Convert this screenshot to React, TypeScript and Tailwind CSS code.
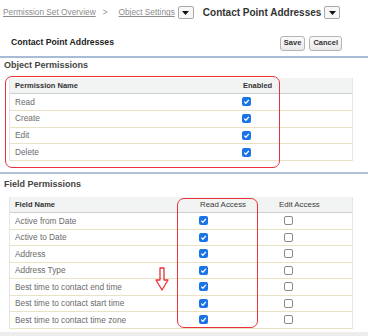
import React from "react";

const objectRows = ["Read", "Create", "Edit", "Delete"];

const fieldRows = [
  "Active from Date",
  "Active to Date",
  "Address",
  "Address Type",
  "Best time to contact end time",
  "Best time to contact start time",
  "Best time to contact time zone",
];

function Checked() {
  return (
    <span className="flex h-[9px] w-[9px] items-center justify-center rounded-[2px] bg-[#1a73e8]">
      <svg width="7" height="7" viewBox="0 0 10 10">
        <path d="M1.8 5.2 L4.1 7.4 L8.4 2.6" fill="none" stroke="#fff" strokeWidth="1.9" />
      </svg>
    </span>
  );
}

function Unchecked() {
  return <span className="block h-[9px] w-[9px] rounded-[2px] border border-[#8a8a8a] bg-white" />;
}

function Dropdown() {
  return (
    <span className="flex h-[13px] w-[16px] items-center justify-center rounded-[2px] border border-[#a9a9a9] bg-[#f7f7f7]">
      <svg width="7" height="4" viewBox="0 0 7 4">
        <path d="M0 0 L7 0 L3.5 4 Z" fill="#111" />
      </svg>
    </span>
  );
}

function Btn({ label }: { label: string }) {
  return (
    <button className="h-[15px] rounded-[3px] border border-[#b5b5b5] bg-gradient-to-b from-[#fbfbfb] to-[#e9e9e9] px-[3px] text-[7.5px] font-bold leading-none text-[#333]">
      {label}
    </button>
  );
}

export default function App() {
  return (
    <div className="relative h-[336px] w-[368px] overflow-hidden bg-white font-['Liberation_Sans',Arial,sans-serif]">
      {/* breadcrumb */}
      <div className="flex h-[25px] items-center pl-[3px] text-[8.3px] text-[#8c8c8c]">
        <span className="underline">Permission Set Overview</span>
        <span className="ml-[7px]">&gt;</span>
        <span className="ml-[11px] underline">Object Settings</span>
        <span className="ml-[3px]">
          <Dropdown />
        </span>
        <span className="ml-[9px] text-[10px] font-bold text-[#333]">Contact Point Addresses</span>
        <span className="ml-[3px]">
          <Dropdown />
        </span>
      </div>

      {/* page header */}
      <div className="flex h-[31px] items-center justify-between pl-[11px] pr-[26px] pt-[5px]">
        <span className="text-[8.7px] font-bold text-[#222]">Contact Point Addresses</span>
        <div className="flex gap-[4px]">
          <Btn label="Save" />
          <Btn label="Cancel" />
        </div>
      </div>
      <div className="h-[2px] bg-[#a8bcd8]" />

      {/* object permissions */}
      <div className="flex h-[16px] items-center pl-[4px] text-[9px] font-bold text-[#444]">Object Permissions</div>
      <div className="ml-[9px] mt-[4px] w-[344px] border-x border-[#e6e6e6]">
        <div className="grid h-[16px] grid-cols-[229px_1fr] items-center border-b border-[#cfcfcf] bg-[#f2f3f3] text-[7.5px] font-bold text-[#333]">
          <span className="pl-[5px]">Permission Name</span>
          <span className="pl-[4px]">Enabled</span>
        </div>
        {objectRows.map((r) => (
          <div key={r} className="grid h-[16.75px] grid-cols-[229px_1fr] items-center border-b border-[#e8e3c4] text-[8.3px] text-[#6b6b6b]">
            <span className="pl-[5px]">{r}</span>
            <span className="pl-[3px]">
              <Checked />
            </span>
          </div>
        ))}
      </div>

      <div className="mt-[11px] h-[2px] bg-[#b3c2d9]" />

      {/* field permissions */}
      <div className="flex h-[22px] items-center pl-[4px] text-[9px] font-bold text-[#444]">Field Permissions</div>
      <div className="ml-[9px] mt-[1px] w-[344px] border-x border-[#e6e6e6]">
        <div className="grid h-[16px] grid-cols-[186px_79px_1fr] items-center border-b border-[#cfcfcf] bg-[#f2f3f3] text-[7.5px] text-[#333]">
          <span className="pl-[5px] font-bold">Field Name</span>
          <span className="pl-[4px] text-[7.9px] text-[#3c3c3c]">Read Access</span>
          <span className="pl-[4px] text-[7.9px] text-[#3c3c3c]">Edit Access</span>
        </div>
        {fieldRows.map((r) => (
          <div key={r} className="grid h-[16.5px] grid-cols-[186px_79px_1fr] items-center border-b border-[#e8e3c4] text-[8.3px] text-[#6b6b6b]">
            <span className="pl-[5px]">{r}</span>
            <span className="pl-[3px]">
              <Checked />
            </span>
            <span className="pl-[9px]">
              <Unchecked />
            </span>
          </div>
        ))}
      </div>
      <div className="absolute bottom-0 left-0 h-[4px] w-full bg-[#ededed]" />

      {/* annotations */}
      <div className="absolute left-[5px] top-[76px] h-[92px] w-[275px] rounded-[7px] border-[1.5px] border-[#e8333a]" />
      <div className="absolute left-[177px] top-[198px] h-[130px] w-[81px] rounded-[7px] border-[1.5px] border-[#e8333a]" />
      <svg className="absolute left-[155px] top-[267px]" width="14" height="25" viewBox="0 0 14 25">
        <path d="M5 1 L9 1 L9 13 L13 13 L7 23 L1 13 L5 13 Z" fill="none" stroke="#e8333a" strokeWidth="1.3" strokeLinejoin="round" />
      </svg>
    </div>
  );
}
